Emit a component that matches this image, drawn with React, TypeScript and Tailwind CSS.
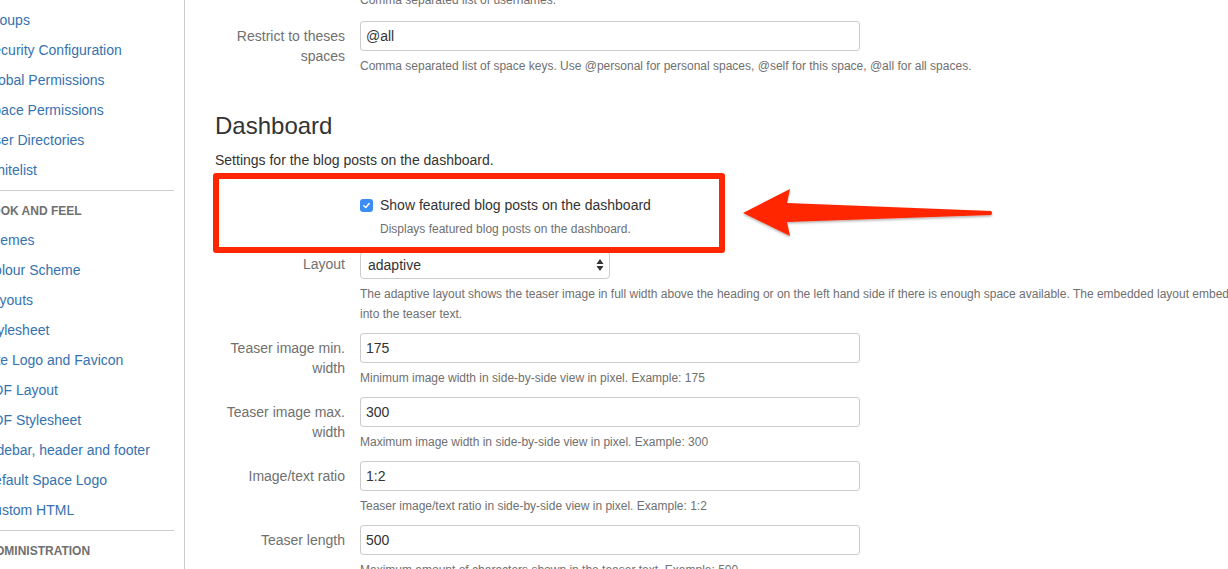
import React from "react";

const sideTop = ["Groups", "Security Configuration", "Global Permissions", "Space Permissions", "User Directories", "Whitelist"];
const sideLook = ["Themes", "Colour Scheme", "Layouts", "Stylesheet", "Site Logo and Favicon", "PDF Layout", "PDF Stylesheet", "Sidebar, header and footer", "Default Space Logo", "Custom HTML"];

function SideLink({ children }: { children: React.ReactNode }) {
  return <div className="py-[5px] leading-[20px] text-[14px] text-[#3572b0] whitespace-nowrap">{children}</div>;
}

function SideHeading({ children }: { children: React.ReactNode }) {
  return (
    <div className="pt-[10px] pb-[4px] leading-[20px] text-[12px] font-bold text-[#707070] uppercase whitespace-nowrap">
      {children}
    </div>
  );
}

function TextRow({ label, value, desc }: { label: React.ReactNode; value: string; desc: string }) {
  return (
    <div className="flex pt-[5px] pb-[4px]">
      <div className="w-[130px] mr-[15px] shrink-0 text-right pt-[5px] leading-[20px] text-[14px] text-[#707070]">{label}</div>
      <div className="min-w-0">
        <div className="w-[500px] h-[30px] border border-[#cccccc] rounded-[3px] bg-white px-[5px] flex items-center text-[14px] text-[#333]">
          {value}
        </div>
        <div className="mt-[5px] leading-[20px] text-[12px] text-[#707070] whitespace-nowrap">{desc}</div>
      </div>
    </div>
  );
}

export default function App() {
  return (
    <div
      className="relative w-[1228px] h-[569px] overflow-hidden bg-white flex"
      style={{ fontFamily: '"Liberation Sans", Arial, Helvetica, sans-serif' }}
    >
      <aside className="w-[185px] shrink-0 h-full border-r border-[#cccccc] pr-[10px] pt-[5px] overflow-hidden">
        <div className="-ml-[16px]">
          {sideTop.map((s) => (
            <SideLink key={s}>{s}</SideLink>
          ))}
          <div className="mt-[5px] h-px bg-[#cccccc]" />
          <SideHeading>Look and Feel</SideHeading>
          {sideLook.map((s) => (
            <SideLink key={s}>{s}</SideLink>
          ))}
          <div className="mt-[5px] h-px bg-[#cccccc]" />
          <div className="ml-[3px]">
            <SideHeading>Administration</SideHeading>
          </div>
        </div>
      </aside>

      <main className="flex-1 min-w-0 pl-[30px] overflow-hidden">
        <div className="-mt-[10px] pl-[145px] pb-[6px] leading-[20px] text-[12px] text-[#707070] whitespace-nowrap">
          Comma separated list of usernames.
        </div>
        <TextRow
          label={<>Restrict to theses<br />spaces</>}
          value="@all"
          desc="Comma separated list of space keys. Use @personal for personal spaces, @self for this space, @all for all spaces."
        />

        <h2 className="mt-[31px] leading-[30px] text-[24px] text-[#333]">Dashboard</h2>
        <p className="mt-[9px] leading-[20px] text-[14px] text-[#333]">Settings for the blog posts on the dashboard.</p>

        <div className="mt-[20px] pt-[5px] pb-[7px] pl-[145px]">
          <div className="flex items-center leading-[20px] text-[14px] text-[#333]">
            <span className="w-[13px] h-[13px] rounded-[3px] bg-[#3b8cf4] flex items-center justify-center mr-[7px] shrink-0">
              <svg width="9" height="9" viewBox="0 0 10 10">
                <path d="M2 5.2 L4.2 7.3 L8 2.8" fill="none" stroke="white" strokeWidth="1.6" strokeLinecap="round" strokeLinejoin="round" />
              </svg>
            </span>
            Show featured blog posts on the dashboard
          </div>
          <div className="mt-[4px] pl-[20px] leading-[20px] text-[12px] text-[#707070]">Displays featured blog posts on the dashboard.</div>
        </div>

        <div className="flex pt-[5px] pb-[4px]">
          <div className="w-[130px] mr-[15px] shrink-0 text-right pt-[3px] leading-[20px] text-[14px] text-[#707070]">Layout</div>
          <div className="min-w-0">
            <div className="w-[250px] h-[28px] border border-[#cccccc] rounded-[4px] bg-white pl-[7px] pr-[5px] flex items-center justify-between text-[14px] text-[#333]">
              <span>adaptive</span>
              <svg width="8" height="14" viewBox="0 0 8 14">
                <path d="M4 1 L7.5 6 L0.5 6 Z" fill="#333" />
                <path d="M4 13 L7.5 8 L0.5 8 Z" fill="#333" />
              </svg>
            </div>
            <div className="mt-[5px] leading-[20px] text-[12px] text-[#707070] whitespace-nowrap">
              The adaptive layout shows the teaser image in full width above the heading or on the left hand side if there is enough space available. The embedded layout embeds the teaser image
              <br />
              into the teaser text.
            </div>
          </div>
        </div>

        <TextRow label={<>Teaser image min.<br />width</>} value="175" desc="Minimum image width in side-by-side view in pixel. Example: 175" />
        <TextRow label={<>Teaser image max.<br />width</>} value="300" desc="Maximum image width in side-by-side view in pixel. Example: 300" />
        <TextRow label="Image/text ratio" value="1:2" desc="Teaser image/text ratio in side-by-side view in pixel. Example: 1:2" />
        <TextRow label="Teaser length" value="500" desc="Maximum amount of characters shown in the teaser text. Example: 500" />
      </main>

      <div className="absolute left-[213px] top-[173px] w-[512px] h-[80px] border-[6px] border-[#ff2600] rounded-[3px] pointer-events-none" />

      <svg className="absolute left-0 top-0 pointer-events-none" width="1228" height="569" viewBox="0 0 1228 569">
        <defs>
          <filter id="sh" x="-10%" y="-30%" width="120%" height="160%">
            <feDropShadow dx="0" dy="1.5" stdDeviation="1.2" floodColor="#000" floodOpacity="0.3" />
          </filter>
        </defs>
        <path
          d="M743 213 L790 189 L787 203 L991 211 Q993 213 991 215 L787 222 L790 236 Z"
          fill="#ff2600"
          filter="url(#sh)"
        />
      </svg>
    </div>
  );
}
